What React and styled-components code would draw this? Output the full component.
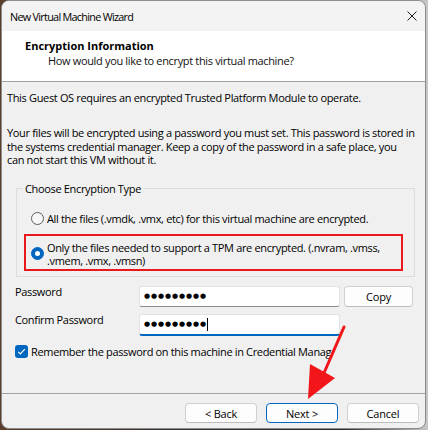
import React from "react";
import styled, { createGlobalStyle } from "styled-components";

const GlobalStyle = createGlobalStyle`
  html, body { margin: 0; padding: 0; }
  body {
    width: 428px;
    height: 430px;
    overflow: hidden;
    background: linear-gradient(90deg, #5b3f2c 0%, #3c3430 40%, #2a2a2a 80%, #c8c8c8 100%);
    font-family: "Open Sans", "Noto Sans", sans-serif;
    font-size: 11px;
    letter-spacing: -0.34px;
    color: #000;
  }
`;

const Stage = styled.div`
  position: relative;
  width: 428px;
  height: 430px;
`;

const Window = styled.div`
  box-sizing: border-box;
  margin-left: 1px;
  width: 425px;
  height: 429px;
  border: 1px solid #8c8c8c;
  border-radius: 8px;
  background: #f0f0f0;
  overflow: hidden;
  display: flex;
  flex-direction: column;
`;

const TitleBar = styled.div`
  height: 30px;
  flex: none;
  background: #f3f3f3;
  display: flex;
  align-items: center;
  justify-content: space-between;
  padding: 0 8px 0 8px;
  font-size: 10.8px;
  letter-spacing: -0.7px;
`;

const Header = styled.div`
  flex: none;
  background: #fff;
  border-bottom: 1px solid #a0a0a0;
  padding: 7px 0 0 23px;
  box-sizing: border-box;
  height: 51px;
`;

const HeaderTitle = styled.div`
  font-weight: 700;
  font-size: 11px;
  line-height: 15px;
  letter-spacing: 0;
`;

const HeaderSub = styled.div`
  line-height: 15px;
  padding-left: 23px;
  color: #111;
`;

const Body = styled.div`
  flex: 1;
  padding: 9px 0 0 5px;
  display: flex;
  flex-direction: column;
`;

const Para = styled.p`
  margin: ${(p) => p.$mt || 0}px 0 0;
  line-height: ${(p) => p.$lh || 14}px;
  white-space: nowrap;
`;

const Group = styled.fieldset`
  margin: 15px 10px 0 9px;
  padding: 16px 0 5px 14px;
  border: 1px solid #dcdcdc;
  min-width: 0;
`;

const Legend = styled.legend`
  margin-left: -8px;
  padding: 0 2px;
  line-height: 14px;
`;

const OptionRow = styled.div`
  display: flex;
  align-items: ${(p) => (p.$top ? "flex-start" : "center")};
  gap: 3px;
  line-height: ${(p) => (p.$top ? 13 : 14)}px;
  white-space: nowrap;
`;

const Radio = styled.span`
  flex: none;
  box-sizing: border-box;
  width: 13px;
  height: 13px;
  border-radius: 50%;
  margin-top: ${(p) => (p.$top ? 6 : 0)}px;
  border: 1px solid ${(p) => (p.$checked ? "#0067c0" : "#5d5d5d")};
  background: ${(p) => (p.$checked ? "#0067c0" : "#f7f7f7")};
  display: flex;
  align-items: center;
  justify-content: center;
  &::after {
    content: "";
    display: ${(p) => (p.$checked ? "block" : "none")};
    width: 5px;
    height: 5px;
    border-radius: 50%;
    background: #fff;
  }
`;

const Highlight = styled.div`
  margin: 8px 11px 0 -7px;
  padding: 5px 0 2px 5px;
  border: 2px solid #e8181c;
`;

const Form = styled.div`
  margin: 9px 0 0 8px;
  display: grid;
  grid-template-columns: 120px 201px 69px;
  column-gap: 4px;
  row-gap: 7px;
  align-items: start;
`;

const Label = styled.div`
  line-height: 14px;
  margin-top: -1px;
`;

const Field = styled.div`
  box-sizing: border-box;
  height: ${(p) => (p.$focus ? 22 : 21)}px;
  background: #fff;
  border: 1px solid #e3e3e3;
  border-bottom: ${(p) => (p.$focus ? "2px solid #0067c0" : "1px solid #8a8a8a")};
  border-radius: 3px;
  padding-left: 4px;
  display: flex;
  align-items: center;
`;

const Dots = styled.span`
  font-family: "DejaVu Sans", sans-serif;
  font-size: 7px;
  letter-spacing: 0.9px;
  line-height: 10px;
`;

const Caret = styled.span`
  display: inline-block;
  width: 1px;
  height: 13px;
  background: #000;
`;

const Button = styled.button`
  box-sizing: border-box;
  width: ${(p) => p.$w || 72}px;
  height: ${(p) => p.$h || 20}px;
  padding: 0;
  background: #fdfdfd;
  border: 1px solid ${(p) => (p.$primary ? "#0067c0" : "#d0d0d0")};
  border-bottom-color: ${(p) => (p.$primary ? "#0067c0" : "#bdbdbd")};
  border-radius: 4px;
  font-family: inherit;
  font-size: 11px;
  letter-spacing: -0.2px;
  color: #000;
  line-height: 1;
`;

const CheckRow = styled.div`
  margin: 9px 0 0 8px;
  display: flex;
  align-items: center;
  gap: 3px;
  line-height: 14px;
`;

const CheckBox = styled.span`
  flex: none;
  width: 13px;
  height: 13px;
  border-radius: 3px;
  background: #0067c0;
  display: flex;
  align-items: center;
  justify-content: center;
`;

const ClipText = styled.span`
  width: 302px;
  overflow: hidden;
  white-space: nowrap;
`;

const Footer = styled.div`
  flex: none;
  border-top: 1px solid #a0a0a0;
  padding: 9px 6px 5px 0;
  display: flex;
  justify-content: flex-end;
  gap: 9px;
`;

const Overlay = styled.svg`
  position: absolute;
  left: 0;
  top: 0;
  pointer-events: none;
`;

export default function App() {
  return (
    <Stage>
      <GlobalStyle />
      <Window>
        <TitleBar>
          <span>New Virtual Machine Wizard</span>
          <svg width="10" height="10" viewBox="0 0 10 10">
            <path d="M0.5 0.5 L9.5 9.5 M9.5 0.5 L0.5 9.5" stroke="#1a1a1a" strokeWidth="1" />
          </svg>
        </TitleBar>
        <Header>
          <HeaderTitle>Encryption Information</HeaderTitle>
          <HeaderSub>How would you like to encrypt this virtual machine?</HeaderSub>
        </Header>
        <Body>
          <Para>This Guest OS requires an encrypted Trusted Platform Module to operate.</Para>
          <Para $mt={21} $lh={13.5}>
            Your files will be encrypted using a password you must set. This password is stored in
            <br />
            the systems credential manager. Keep a copy of the password in a safe place, you
            <br />
            can not start this VM without it.
          </Para>
          <Group>
            <Legend>Choose Encryption Type</Legend>
            <OptionRow>
              <Radio />
              <span>All the files (.vmdk, .vmx, etc) for this virtual machine are encrypted.</span>
            </OptionRow>
            <Highlight>
              <OptionRow $top>
                <Radio $checked $top />
                <span>
                  Only the files needed to support a TPM are encrypted. (.nvram, .vmss,
                  <br />
                  .vmem, .vmx, .vmsn)
                </span>
              </OptionRow>
            </Highlight>
          </Group>
          <Form>
            <Label>Password</Label>
            <Field>
              <Dots>●●●●●●●●●</Dots>
            </Field>
            <Button $w={69} $h={21}>Copy</Button>
            <Label>Confirm Password</Label>
            <Field $focus>
              <Dots>●●●●●●●●●</Dots>
              <Caret />
            </Field>
          </Form>
          <CheckRow>
            <CheckBox>
              <svg width="9" height="9" viewBox="0 0 9 9">
                <path d="M1.2 4.8 L3.4 7 L7.8 2.2" fill="none" stroke="#fff" strokeWidth="1.2" />
              </svg>
            </CheckBox>
            <ClipText>Remember the password on this machine in Credential Manager</ClipText>
          </CheckRow>
        </Body>
        <Footer>
          <Button>&lt; Back</Button>
          <Button $primary>Next &gt;</Button>
          <Button>Cancel</Button>
        </Footer>
      </Window>
      <Overlay width="428" height="430" viewBox="0 0 428 430">
        <path d="M344 327 L324 373" stroke="#f2161a" strokeWidth="3" strokeLinecap="round" />
        <polygon points="310,364 335,378 308,399" fill="#f2161a" />
      </Overlay>
    </Stage>
  );
}
